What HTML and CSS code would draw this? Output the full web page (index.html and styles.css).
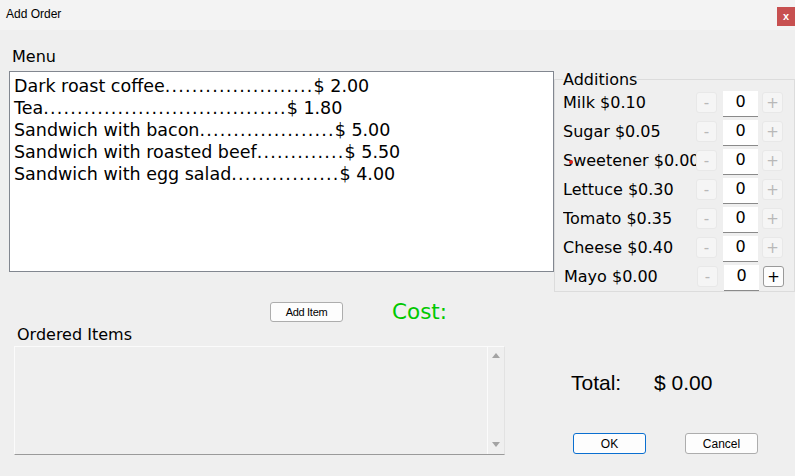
FILE: index.html
```html
<!DOCTYPE html>
<html>
<head>
<meta charset="utf-8">
<title>Add Order</title>
<link rel="stylesheet" href="styles.css">
</head>
<body>
<div class="window">
  <div class="titlebar">
    <span class="title">Add Order</span>
    <span class="close">x</span>
  </div>
  <div class="dialog">
    <div class="top">
      <div class="menu-col">
        <div class="label menu-label">Menu</div>
        <div class="menu-box">
          <div class="menu-line">Dark roast coffee<span class="dots">......................</span>$ 2.00</div>
          <div class="menu-line">Tea<span class="dots">....................................</span>$ 1.80</div>
          <div class="menu-line">Sandwich with bacon<span class="dots">....................</span>$ 5.00</div>
          <div class="menu-line">Sandwich with roasted beef<span class="dots">.............</span>$ 5.50</div>
          <div class="menu-line">Sandwich with egg salad<span class="dots">................</span>$ 4.00</div>
        </div>
      </div>
      <fieldset class="additions">
        <legend class="legend">Additions</legend>
        <div class="add-row"><span class="add-name">Milk $0.10</span><span class="step">-</span><span class="qty">0</span><span class="step">+</span></div>
        <div class="add-row"><span class="add-name">Sugar $0.05</span><span class="step">-</span><span class="qty">0</span><span class="step">+</span></div>
        <div class="add-row"><span class="add-name">Sweetener $0.00</span><span class="step">-</span><span class="qty">0</span><span class="step">+</span></div>
        <div class="add-row"><span class="add-name">Lettuce $0.30</span><span class="step">-</span><span class="qty">0</span><span class="step">+</span></div>
        <div class="add-row"><span class="add-name">Tomato $0.35</span><span class="step">-</span><span class="qty">0</span><span class="step">+</span></div>
        <div class="add-row"><span class="add-name">Cheese $0.40</span><span class="step">-</span><span class="qty">0</span><span class="step">+</span></div>
        <div class="add-row mayo"><span class="add-name">Mayo $0.00</span><span class="step">-</span><span class="qty">0</span><span class="step active">+</span></div>
      </fieldset>
    </div>
    <div class="bottom">
      <div class="order-col">
        <div class="action-row">
          <button class="btn add-btn">Add Item</button>
          <span class="cost">Cost:</span>
        </div>
        <div class="label ordered-label">Ordered Items</div>
        <div class="order-list">
          <div class="scrollbar">
            <span class="arrow up"></span>
            <span class="arrow down"></span>
          </div>
        </div>
      </div>
      <div class="total-col">
        <div class="total-row"><span class="total-label">Total:</span><span class="total-value">$ 0.00</span></div>
        <div class="dialog-buttons">
          <button class="btn ok-btn">OK</button>
          <button class="btn cancel-btn">Cancel</button>
        </div>
      </div>
    </div>
    <span class="red-dot"></span>
  </div>
</div>
</body>
</html>
```
FILE: styles.css
```css
html, body {
  margin: 0;
  padding: 0;
}
body {
  width: 795px;
  height: 476px;
  overflow: hidden;
  background: #efefef;
  color: #000;
  font-family: "DejaVu Sans", Verdana, sans-serif;
}
.window {
  width: 795px;
  height: 476px;
  display: flex;
  flex-direction: column;
}
.titlebar {
  height: 30px;
  background: #f3f3f3;
  display: flex;
  align-items: flex-start;
  flex-shrink: 0;
}
.title {
  font-family: "Liberation Sans", Arial, sans-serif;
  font-size: 12px;
  line-height: 14px;
  padding: 7px 0 0 6px;
}
.close {
  margin: 7px 0 0 auto;
  width: 18px;
  height: 19px;
  background: #c75050;
  color: #fff;
  font-family: "Liberation Sans", Arial, sans-serif;
  font-weight: bold;
  font-size: 11px;
  line-height: 18px;
  text-align: center;
}
.dialog {
  position: relative;
  flex: 1;
}
.top {
  display: flex;
  align-items: flex-start;
}
.menu-col {
  width: 545px;
  padding: 18px 0 0 9px;
}
.label {
  font-size: 16px;
  line-height: 18px;
}
.menu-label {
  padding-left: 3px;
  margin-bottom: 5px;
}
.menu-box {
  box-sizing: border-box;
  width: 545px;
  height: 201px;
  background: #fff;
  border: 1px solid #828790;
  padding: 3px 0 0 4px;
}
.menu-line {
  font-size: 17.5px;
  line-height: 22px;
  white-space: nowrap;
}
.dots {
  letter-spacing: 1.2px;
}
.additions {
  margin: 41px 0 0 0;
  padding: 0 0 0 8px;
  width: 250px;
  min-width: 0;
  border: 1px solid #dcdcdc;
  box-sizing: border-box;
}
.legend {
  padding: 0;
  font-size: 16px;
  line-height: 17px;
}
.add-row {
  height: 29px;
  display: flex;
  align-items: center;
}
.add-row.mayo {
  padding-left: 1px;
}
.add-name {
  width: 133px;
  flex-shrink: 0;
  overflow: hidden;
  white-space: nowrap;
  font-size: 16px;
  line-height: 20px;
}
.step {
  box-sizing: border-box;
  width: 21px;
  height: 21px;
  background: #f5f5f5;
  border: 1px solid #e8e8e8;
  border-radius: 3px;
  color: #b8b8b8;
  font-size: 15px;
  line-height: 21px;
  text-align: center;
  flex-shrink: 0;
}
.step.active {
  background: #fdfdfd;
  border-color: #9a9a9a;
  color: #000;
}
.qty {
  align-self: flex-end;
  box-sizing: border-box;
  width: 35px;
  height: 26px;
  margin: 0 4px 0 6px;
  background: #fff;
  border-bottom: 1px solid #8a8a8a;
  font-size: 16px;
  line-height: 22px;
  text-align: center;
  flex-shrink: 0;
}
.bottom {
  display: flex;
  align-items: flex-start;
}
.order-col {
  width: 554px;
  flex-shrink: 0;
}
.action-row {
  display: flex;
  align-items: center;
  height: 20px;
  margin-top: 10px;
}
.btn {
  box-sizing: border-box;
  background: #fdfdfd;
  border: 1px solid #adadad;
  border-radius: 3px;
  color: #000;
  font-family: "Liberation Sans", Arial, sans-serif;
  font-size: 12px;
  padding: 0;
  margin: 0;
}
.add-btn {
  margin-left: 270px;
  width: 73px;
  height: 20px;
  font-size: 11px;
  letter-spacing: -0.3px;
}
.cost {
  margin-left: 49px;
  color: #00c800;
  font-size: 21.5px;
  line-height: 20px;
}
.ordered-label {
  padding-left: 17px;
  margin-top: 4px;
}
.order-list {
  box-sizing: border-box;
  margin: 2px 0 0 14px;
  width: 491px;
  height: 109px;
  border-top: 1px solid #fbfbfb;
  border-left: 1px solid #fbfbfb;
  border-right: 1px solid #e2e2e2;
  border-bottom: 1px solid #9a9a9a;
  display: flex;
  justify-content: flex-end;
}
.scrollbar {
  width: 16px;
  border-left: 1px solid #fbfbfb;
  display: flex;
  flex-direction: column;
  justify-content: space-between;
  align-items: center;
  padding: 6px 0 7px;
}
.arrow {
  width: 0;
  height: 0;
  border-left: 4px solid transparent;
  border-right: 4px solid transparent;
}
.arrow.up {
  border-bottom: 5px solid #a3a3a3;
}
.arrow.down {
  border-top: 5px solid #a3a3a3;
}
.total-col {
  flex: 1;
}
.total-row {
  margin-top: 79px;
  padding-left: 17px;
  display: flex;
  font-family: "Liberation Sans", Arial, sans-serif;
  font-size: 21px;
  line-height: 24px;
}
.total-label {
  width: 83px;
}
.dialog-buttons {
  display: flex;
  margin-top: 38px;
  padding-left: 19px;
}
.ok-btn, .cancel-btn {
  width: 73px;
  height: 21px;
}
.ok-btn {
  border-color: #0a6fd0;
}
.cancel-btn {
  margin-left: 39px;
}
.red-dot {
  position: absolute;
  left: 569px;
  top: 130px;
  width: 4px;
  height: 4px;
  border-radius: 50%;
  background: #e0201a;
}
```
